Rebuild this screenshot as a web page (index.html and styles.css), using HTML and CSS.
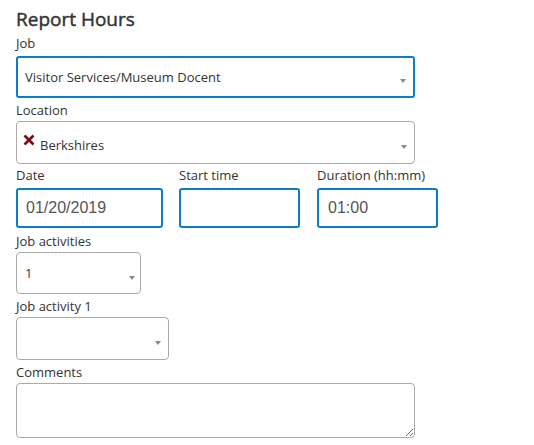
FILE: index.html
```html
<!DOCTYPE html>
<html lang="en">
<head>
<meta charset="utf-8">
<title>Report Hours</title>
<link rel="stylesheet" href="styles.css">
</head>
<body>
<form class="form">
  <h1 class="title">Report Hours</h1>

  <div class="field field-job">
    <label class="label">Job</label>
    <div class="select select-focus select-wide">
      <span class="select-text">Visitor Services/Museum Docent</span>
      <span class="arrow"></span>
    </div>
  </div>

  <div class="field">
    <label class="label">Location</label>
    <div class="select select-wide select-loc">
      <svg class="remove" width="12" height="12" viewBox="0 0 12 12" aria-hidden="true">
        <path d="M1.5 1.5 L10.5 10.5 M10.5 1.5 L1.5 10.5" stroke="#7d0a12" stroke-width="2.6" stroke-linecap="butt" fill="none"/>
      </svg>
      <span class="select-text">Berkshires</span>
      <span class="arrow"></span>
    </div>
  </div>

  <div class="row">
    <div class="field col col-date">
      <label class="label label-input">Date</label>
      <div class="input input-date">01/20/2019</div>
    </div>
    <div class="field col col-start">
      <label class="label label-input">Start time</label>
      <div class="input input-time"></div>
    </div>
    <div class="field col">
      <label class="label label-input">Duration (hh:mm)</label>
      <div class="input input-time">01:00</div>
    </div>
  </div>

  <div class="field">
    <label class="label">Job activities</label>
    <div class="select select-count">
      <span class="select-text">1</span>
      <span class="arrow arrow-count"></span>
    </div>
  </div>

  <div class="field">
    <label class="label">Job activity 1</label>
    <div class="select select-activity">
      <span class="select-text"></span>
      <span class="arrow"></span>
    </div>
  </div>

  <div class="field">
    <label class="label">Comments</label>
    <textarea class="comments"></textarea>
  </div>
</form>
</body>
</html>
```

FILE: styles.css
```css
* { box-sizing: border-box; }

body {
  margin: 0;
  background: #fff;
  font-family: "Open Sans", "Liberation Sans", sans-serif;
  color: #333;
}

.form {
  padding: 7px 16px 0 16px;
}

.title {
  margin: 0 0 4px 0;
  font-size: 19px;
  line-height: 24px;
  font-weight: 400;
  color: #333;
  -webkit-text-stroke: 0.45px #333;
}

.field {
  margin-bottom: 4px;
}

.label {
  display: block;
  font-size: 13px;
  line-height: 16px;
  margin-bottom: 3px;
  color: #333;
}

.field-job .label {
  margin-bottom: 5px;
}

.select {
  position: relative;
  display: flex;
  align-items: center;
  height: 42px;
  border: 1px solid #aaa;
  border-radius: 4px;
  padding: 0 20px 0 8px;
  font-size: 13px;
  color: #333;
  background: #fff;
}

.select-focus {
  border: 2px solid #0c7ec3;
  border-radius: 3px;
  padding-left: 7px;
}

.select-wide { width: 399px; }
.select-loc { height: 43px; padding-left: 6px; }
.select-count { width: 125px; }
.select-activity { width: 153px; height: 43px; }

.select-text {
  white-space: nowrap;
}

.select-loc .select-text {
  padding-top: 5px;
}

.remove {
  flex: none;
  margin-right: 5px;
  margin-top: -5px;
}

.arrow {
  position: absolute;
  right: 7px;
  top: 50%;
  margin-top: 2px;
  width: 0;
  height: 0;
  border-left: 3px solid transparent;
  border-right: 3px solid transparent;
  border-top: 4px solid #888;
}

.arrow-count {
  right: 5px;
  margin-top: 3px;
}

.row {
  display: flex;
  margin-top: -1px;
}

.col-date { margin-right: 16px; }
.col-start { margin-right: 17px; }

.label-input {
  margin-bottom: 5px;
}

.field.col {
  margin-bottom: 5px;
}

.input {
  height: 40px;
  border: 2px solid #0c7ec3;
  border-radius: 3px;
  padding: 0 9px 0 9px;
  display: flex;
  align-items: center;
  font-family: "Liberation Sans", Arial, sans-serif;
  font-size: 16px;
  color: #555;
  background: #fff;
}

.input-date { width: 147px; padding-left: 8px; }
.input-time { width: 121px; }

.comments {
  display: block;
  width: 399px;
  height: 55px;
  border: 1px solid #aaa;
  border-radius: 4px;
  margin: 0;
  padding: 4px 8px;
  font-family: "Open Sans", sans-serif;
  font-size: 13px;
  background: #fff;
}
```
